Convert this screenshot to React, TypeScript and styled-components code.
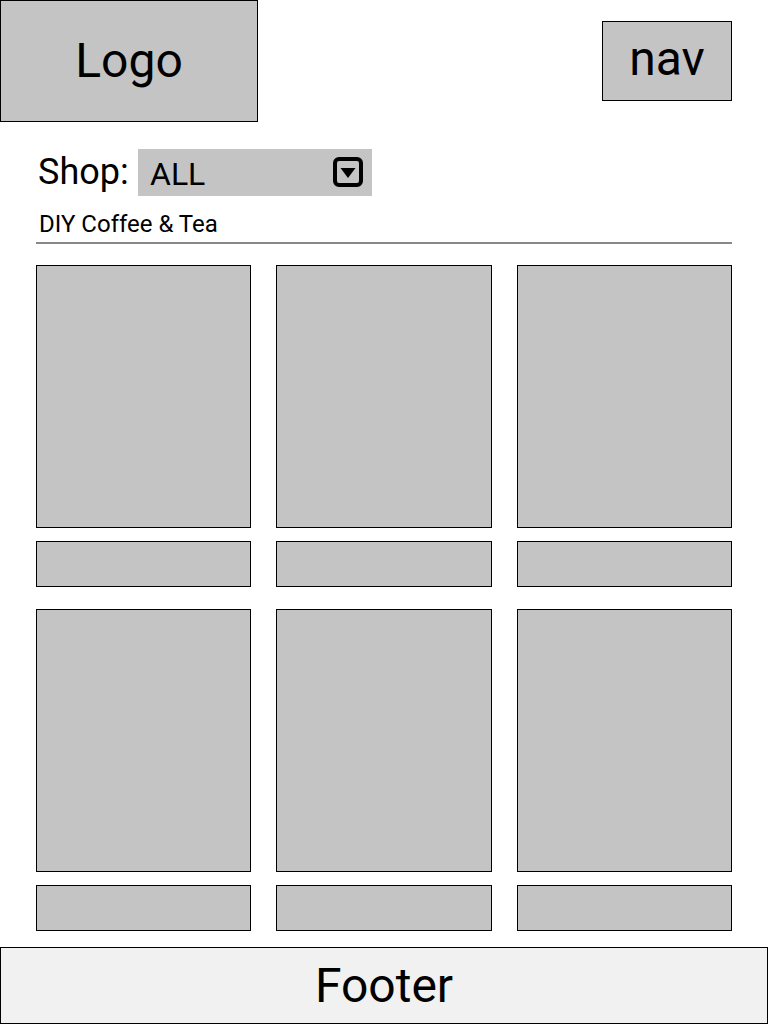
import React from "react";
import styled, { createGlobalStyle } from "styled-components";

const GlobalStyle = createGlobalStyle`
  html, body {
    margin: 0;
    padding: 0;
    background: #ffffff;
  }
  body {
    font-family: Roboto, "Noto Sans", "Liberation Sans", sans-serif;
    color: #000;
  }
  * { box-sizing: border-box; }
`;

const Page = styled.div`
  width: 768px;
  height: 1024px;
  display: flex;
  flex-direction: column;
  overflow: hidden;
`;

const Header = styled.header`
  display: flex;
  justify-content: space-between;
  align-items: flex-start;
`;

const Block = styled.div`
  display: flex;
  align-items: center;
  justify-content: center;
  background: #c4c4c4;
  border: 1px solid #000;
  font-size: 48px;
  line-height: 1;
`;

const Logo = styled(Block)`
  width: 258px;
  height: 122px;
`;

const Nav = styled(Block)`
  width: 130px;
  height: 80px;
  margin: 21px 36px 0 0;
  padding-bottom: 4px;
`;

const Main = styled.main`
  padding: 27px 36px 0;
  display: flex;
  flex-direction: column;
`;

const ShopRow = styled.div`
  display: flex;
  align-items: center;
  height: 47px;
`;

const ShopLabel = styled.span`
  font-size: 36px;
  line-height: 1;
  width: 102px;
  padding-left: 2px;
  padding-bottom: 2px;
`;

const Select = styled.div`
  width: 234px;
  height: 47px;
  background: #c4c4c4;
  display: flex;
  align-items: center;
  justify-content: space-between;
  padding: 0 8px 0 12px;
  font-size: 32px;
`;

const SelectValue = styled.span`
  line-height: 1;
  padding-top: 2px;
`;

const Category = styled.div`
  margin-top: 14px;
  font-size: 24px;
  line-height: 28px;
  padding: 0 0 4px 3px;
  border-bottom: 2px solid #888888;
`;

const Grid = styled.section`
  margin-top: 21px;
  display: grid;
  grid-template-columns: repeat(3, 1fr);
  column-gap: 25px;
  row-gap: 22px;
`;

const Card = styled.div`
  display: flex;
  flex-direction: column;
  gap: 13px;
`;

const Thumb = styled.div<{ $h: number }>`
  height: ${(p) => p.$h}px;
  background: #c4c4c4;
  border: 1px solid #000;
`;

const Footer = styled.footer`
  margin-top: 16px;
  height: 77px;
  background: #f1f1f1;
  border: 1px solid #000;
  display: flex;
  align-items: center;
  justify-content: center;
  font-size: 48px;
  line-height: 1;
`;

const DropIcon = () => (
  <svg width="32" height="31" viewBox="0 0 32 31">
    <rect x="3" y="2" width="26" height="26" rx="4" ry="4" fill="none" stroke="#000" strokeWidth="4" />
    <polygon points="8.5,11 23.5,11 16,21" fill="#000" />
  </svg>
);

export default function App() {
  const items = [0, 1, 2, 3, 4, 5];
  return (
    <>
      <GlobalStyle />
      <Page>
        <Header>
          <Logo>Logo</Logo>
          <Nav>nav</Nav>
        </Header>
        <Main>
          <ShopRow>
            <ShopLabel>Shop:</ShopLabel>
            <Select>
              <SelectValue>ALL</SelectValue>
              <DropIcon />
            </Select>
          </ShopRow>
          <Category>DIY Coffee &amp; Tea</Category>
          <Grid>
            {items.map((i) => (
              <Card key={i}>
                <Thumb $h={263} />
                <Thumb $h={46} />
              </Card>
            ))}
          </Grid>
        </Main>
        <Footer>Footer</Footer>
      </Page>
    </>
  );
}
